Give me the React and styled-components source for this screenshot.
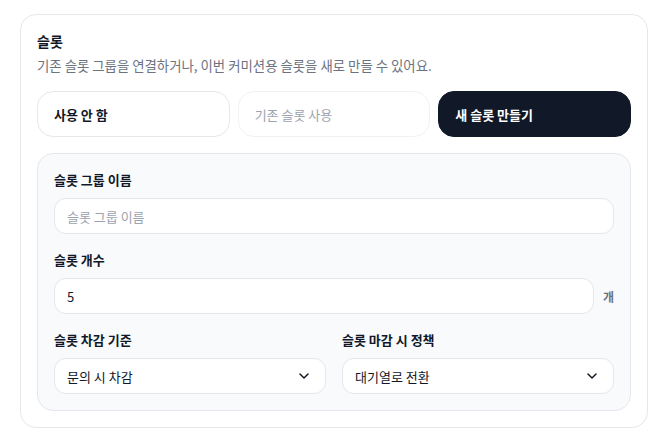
import styled, { createGlobalStyle } from "styled-components";
import { ChevronDown } from "lucide-react";

const GlobalStyle = createGlobalStyle`
  * {
    box-sizing: border-box;
  }

  body {
    margin: 0;
    background: #ffffff;
    font-family: "Noto Sans CJK KR", "Noto Sans", sans-serif;
    color: #111827;
  }
`;

const modes = [
  { key: "none", label: "사용 안 함" },
  { key: "existing", label: "기존 슬롯 사용", disabled: true },
  { key: "new", label: "새 슬롯 만들기" },
];

const App = () => {
  const selected = "new";

  return (
    <>
      <GlobalStyle />
      <Page>
        <Card>
          <Header>
            <Title>슬롯</Title>
            <Description>
              기존 슬롯 그룹을 연결하거나, 이번 커미션용 슬롯을 새로 만들 수
              있어요.
            </Description>
          </Header>

          <ModeGroup>
            {modes.map((mode) => (
              <ModeButton
                key={mode.key}
                $active={mode.key === selected}
                $disabled={mode.disabled}
              >
                {mode.label}
              </ModeButton>
            ))}
          </ModeGroup>

          <Panel>
            <Field>
              <Label>슬롯 그룹 이름</Label>
              <Input placeholder="슬롯 그룹 이름" />
            </Field>

            <Field>
              <Label>슬롯 개수</Label>
              <InputRow>
                <Input defaultValue="5" />
                <Unit>개</Unit>
              </InputRow>
            </Field>

            <SelectGrid>
              <Field>
                <Label>슬롯 차감 기준</Label>
                <Select>
                  <span>문의 시 차감</span>
                  <ChevronDown size={16} strokeWidth={2.2} />
                </Select>
              </Field>
              <Field>
                <Label>슬롯 마감 시 정책</Label>
                <Select>
                  <span>대기열로 전환</span>
                  <ChevronDown size={16} strokeWidth={2.2} />
                </Select>
              </Field>
            </SelectGrid>
          </Panel>
        </Card>
      </Page>
    </>
  );
};

const Page = styled.div`
  padding: 14px 15px 0 20px;
`;

const Card = styled.section`
  display: flex;
  flex-direction: column;
  gap: 16px;

  padding: 16px;

  background-color: #ffffff;
  border: 1px solid #e5e7eb;
  border-radius: 16px;
`;

const Header = styled.div`
  display: flex;
  flex-direction: column;
  gap: 4px;
`;

const Title = styled.div`
  font-size: 14px;
  line-height: 20px;
  font-weight: 700;
  color: #111827;
`;

const Description = styled.p`
  margin: 0;
  font-size: 13.4px;
  line-height: 20px;
  color: #6b7280;
`;

const ModeGroup = styled.div`
  display: grid;
  grid-template-columns: repeat(3, 1fr);
  gap: 8px;
`;

const ModeButton = styled.button`
  height: 46px;
  padding: 0 16px;

  text-align: left;
  font-family: inherit;
  font-size: 13px;
  font-weight: ${({ $disabled }) => ($disabled ? 400 : 700)};
  color: ${({ $active, $disabled }) =>
    $active ? "#ffffff" : $disabled ? "#9ca3af" : "#111827"};

  background-color: ${({ $active }) => ($active ? "#111827" : "#ffffff")};
  border: 1px solid
    ${({ $active, $disabled }) =>
      $active ? "#111827" : $disabled ? "#f1f2f4" : "#e5e7eb"};
  border-radius: 16px;
`;

const Panel = styled.div`
  display: flex;
  flex-direction: column;
  gap: 16px;

  padding: 16px;

  background-color: #f9fafb;
  border: 1px solid #e5e7eb;
  border-radius: 16px;
`;

const Field = styled.div`
  display: flex;
  flex-direction: column;
  gap: 8px;
  min-width: 0;
`;

const Label = styled.div`
  font-size: 13px;
  line-height: 20px;
  font-weight: 700;
  color: #111827;
`;

const Input = styled.input`
  width: 100%;
  height: 36px;
  padding: 0 12px;

  font-family: inherit;
  font-size: 13px;
  color: #111827;

  background-color: #ffffff;
  border: 1px solid #e5e7eb;
  border-radius: 12px;
  outline: none;

  &::placeholder {
    color: #9ca3af;
  }
`;

const InputRow = styled.div`
  display: flex;
  align-items: center;
  gap: 9px;
`;

const Unit = styled.span`
  flex-shrink: 0;
  font-size: 12px;
  font-weight: 700;
  color: #6b7280;
`;

const SelectGrid = styled.div`
  display: grid;
  grid-template-columns: 1fr 1fr;
  gap: 16px;
`;

const Select = styled.div`
  display: flex;
  align-items: center;
  justify-content: space-between;

  height: 36px;
  padding: 0 13px 0 12px;

  font-size: 13px;
  color: #111827;

  background-color: #ffffff;
  border: 1px solid #e5e7eb;
  border-radius: 12px;

  > svg {
    color: #111827;
  }
`;

export default App;
